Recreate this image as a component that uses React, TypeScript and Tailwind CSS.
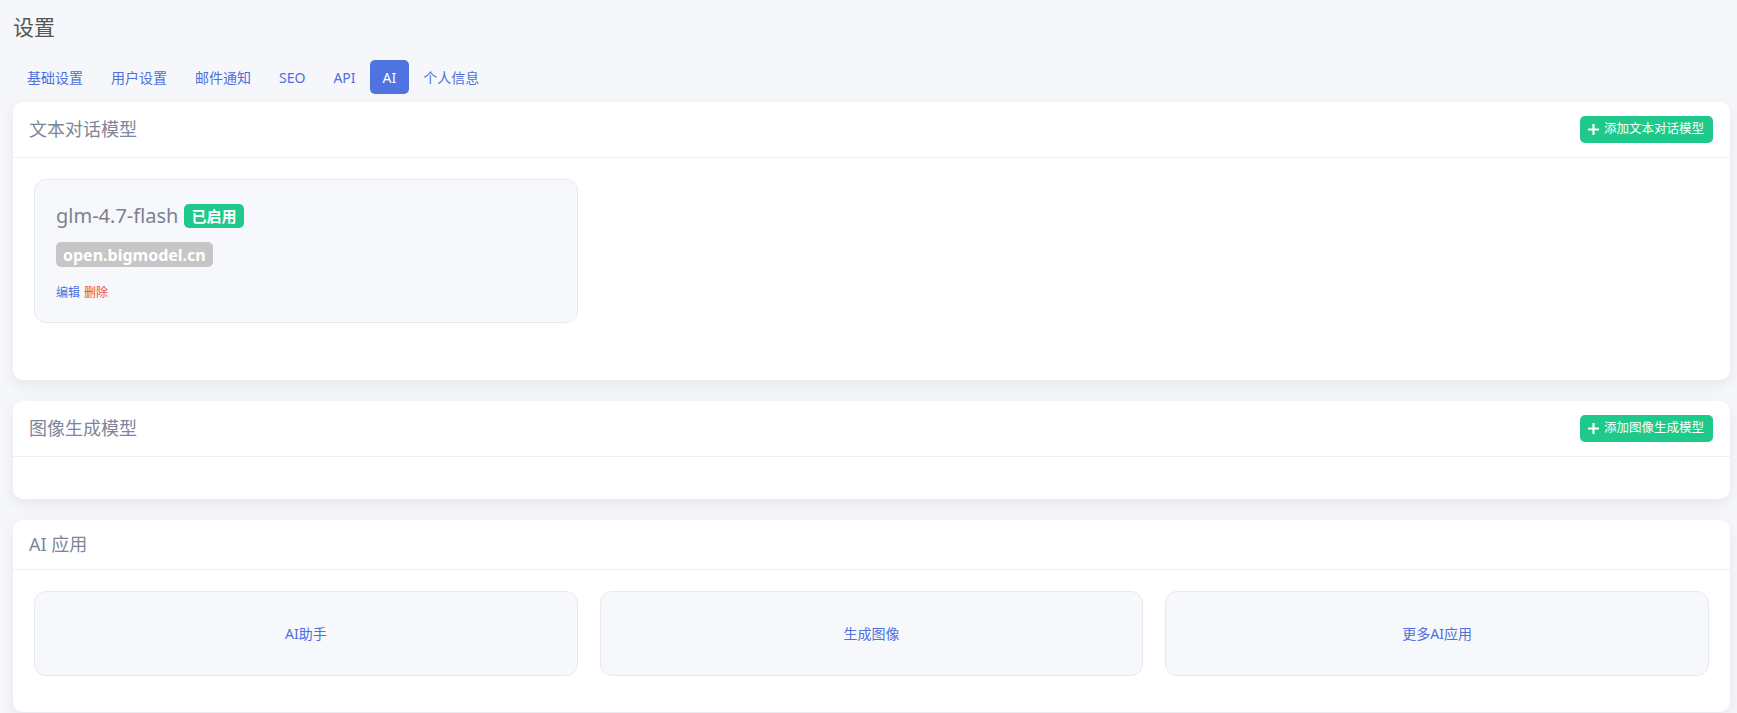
import React from "react";

const tabs = ["基础设置", "用户设置", "邮件通知", "SEO", "API", "AI", "个人信息"];
const apps = ["AI助手", "生成图像", "更多AI应用"];

function PlusIcon() {
  return (
    <svg width="11" height="11" viewBox="0 0 12 12" aria-hidden>
      <path d="M6 1v10M1 6h10" stroke="currentColor" strokeWidth="2.4" strokeLinecap="round" />
    </svg>
  );
}

function CardHeader({ title, action }: { title: string; action?: string }) {
  return (
    <div className="flex min-h-[49px] items-center justify-between border-b border-[#eef0f4] py-[14px] pl-[16px] pr-[17px]">
      <div className="text-[18px] leading-[21px] text-[#80859a]">{title}</div>
      {action && (
        <button className="flex h-[27px] items-center gap-[5px] rounded-[5px] bg-[#1ec98b] pl-[8px] pr-[9px] text-[12.5px] text-white">
          <PlusIcon />
          {action}
        </button>
      )}
    </div>
  );
}

export default function App() {
  return (
    <div className="min-h-screen bg-[#f6f7fb] pl-[13px] pr-[7px] font-['Noto_Sans','Noto_Sans_CJK_SC',sans-serif]">
      <h1 className="pt-[13px] text-[21px] leading-[28px] text-[#555]">设置</h1>

      <nav className="mt-[19px] flex">
        {tabs.map((t) => (
          <div
            key={t}
            className={
              t === "AI"
                ? "flex h-[34px] items-center rounded-[5px] bg-[#4f73e0] px-[13px] text-[14px] text-white"
                : "flex h-[34px] items-center px-[14px] text-[14px] text-[#4f6fdf]"
            }
          >
            {t}
          </div>
        ))}
      </nav>

      <section className="mt-[8px] rounded-[10px] bg-white shadow-[0_5px_15px_rgba(0,0,0,0.07)]">
        <CardHeader title="文本对话模型" action="添加文本对话模型" />
        <div className="grid grid-cols-3 gap-[22px] px-[21px] pb-[57px] pt-[21px]">
          <div className="h-[144px] rounded-[12px] border border-[#e6e9f0] bg-[#f7f8fc] pl-[21px] pt-[24px]">
            <div className="flex items-center gap-[6px]">
              <span className="text-[20px] leading-[24px] text-[#7d8190]">glm-4.7-flash</span>
              <span className="flex h-[24px] items-center rounded-[5px] bg-[#1ec98b] px-[7px] text-[15px] font-bold text-white">
                已启用
              </span>
            </div>
            <div className="mt-[14px] flex">
              <span className="flex h-[25px] items-center rounded-[5px] bg-[#c6c6c6] px-[7px] text-[16px] font-bold text-white">
                open.bigmodel.cn
              </span>
            </div>
            <div className="mt-[18px] flex gap-[4px] text-[12px] leading-[16px]">
              <a className="text-[#4f6fdf]">编辑</a>
              <a className="text-[#e74c3c]">删除</a>
            </div>
          </div>
        </div>
      </section>

      <section className="mt-[21px] rounded-[10px] bg-white shadow-[0_5px_15px_rgba(0,0,0,0.07)]">
        <CardHeader title="图像生成模型" action="添加图像生成模型" />
        <div className="h-[42px]" />
      </section>

      <section className="mt-[21px] rounded-[10px] bg-white shadow-[0_5px_15px_rgba(0,0,0,0.07)]">
        <CardHeader title="AI 应用" />
        <div className="grid grid-cols-3 gap-[22px] px-[21px] pb-[36px] pt-[21px]">
          {apps.map((a) => (
            <div
              key={a}
              className="flex h-[85px] items-center justify-center rounded-[12px] border border-[#e6e9f0] bg-[#f7f8fc] text-[14px] text-[#4f6fdf]"
            >
              {a}
            </div>
          ))}
        </div>
      </section>
    </div>
  );
}
